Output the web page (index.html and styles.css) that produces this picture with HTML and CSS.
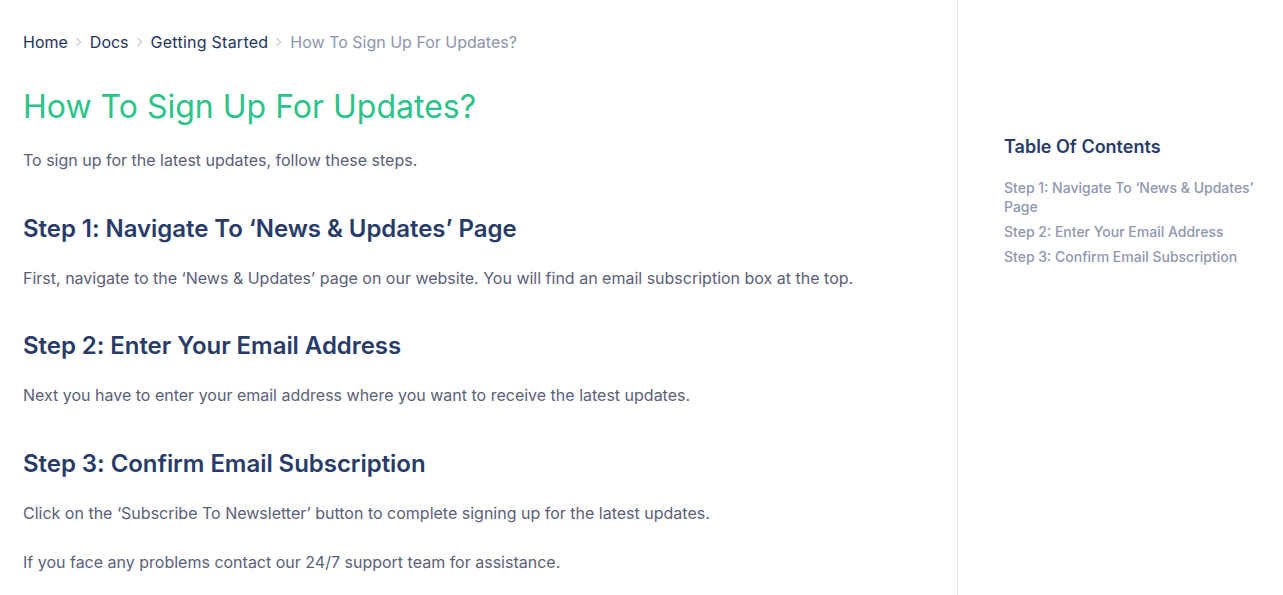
FILE: index.html
```html
<!DOCTYPE html>
<html lang="en">
<head>
<meta charset="utf-8">
<title>How To Sign Up For Updates?</title>
<link rel="stylesheet" href="styles.css">
</head>
<body>
<div class="page">
  <main class="content">
    <nav class="breadcrumb">
      <a href="#">Home</a>
      <svg class="chev" viewBox="0 0 8 10" width="8" height="10"><path d="M2 1.5 L5.5 5 L2 8.5" fill="none" stroke="#ccd1df" stroke-width="1.6" stroke-linecap="round" stroke-linejoin="round"/></svg>
      <a href="#">Docs</a>
      <svg class="chev" viewBox="0 0 8 10" width="8" height="10"><path d="M2 1.5 L5.5 5 L2 8.5" fill="none" stroke="#ccd1df" stroke-width="1.6" stroke-linecap="round" stroke-linejoin="round"/></svg>
      <a href="#" class="wide">Getting Started</a>
      <svg class="chev" viewBox="0 0 8 10" width="8" height="10"><path d="M2 1.5 L5.5 5 L2 8.5" fill="none" stroke="#ccd1df" stroke-width="1.6" stroke-linecap="round" stroke-linejoin="round"/></svg>
      <span class="current">How To Sign Up For Updates?</span>
    </nav>
    <h1 class="title">How To Sign Up For Updates?</h1>
    <p class="text">To sign up for the latest updates, follow these steps.</p>
    <h2 class="step">Step 1: Navigate To ‘News &amp; Updates’ Page</h2>
    <p class="text">First, navigate to the ‘News &amp; Updates’ page on our website. You will find an email subscription box at the top.</p>
    <h2 class="step">Step 2: Enter Your Email Address</h2>
    <p class="text">Next you have to enter your email address where you want to receive the latest updates.</p>
    <h2 class="step">Step 3: Confirm Email Subscription</h2>
    <p class="text">Click on the ‘Subscribe To Newsletter’ button to complete signing up for the latest updates.</p>
    <p class="text">If you face any problems contact our 24/7 support team for assistance.</p>
  </main>
  <aside class="sidebar">
    <h3 class="toc-title">Table Of Contents</h3>
    <ul class="toc">
      <li><a href="#">Step 1: Navigate To ‘News &amp; Updates’ Page</a></li>
      <li><a href="#">Step 2: Enter Your Email Address</a></li>
      <li><a href="#">Step 3: Confirm Email Subscription</a></li>
    </ul>
  </aside>
</div>
</body>
</html>
```

FILE: styles.css
```css
html, body {
  margin: 0;
  padding: 0;
  background: #ffffff;
}
body {
  font-family: Inter, "Noto Sans", "Liberation Sans", sans-serif;
  -webkit-font-smoothing: antialiased;
}
.page {
  display: flex;
  min-height: 595px;
}
.content {
  width: 934px;
  flex: none;
  padding: 30px 0 0 23px;
  border-right: 1px solid #e3e7f0;
  box-sizing: content-box;
}
.breadcrumb {
  display: flex;
  align-items: center;
  gap: 7px;
  font-size: 16px;
  line-height: 24px;
}
.breadcrumb a {
  color: #23335d;
  text-decoration: none;
}
.breadcrumb .wide {
  letter-spacing: 0.25px;
}
.breadcrumb .chev {
  display: block;
}
.breadcrumb .current {
  color: #8d94ad;
}
.title {
  margin: 34px 0 22px;
  font-size: 32px;
  line-height: 38px;
  font-weight: 400;
  color: #2cc38a;
}
.text {
  margin: 0 0 25px;
  font-size: 16px;
  line-height: 24px;
  color: #5b6079;
}
.step {
  margin: 40.6px 0 21px;
  font-size: 24px;
  line-height: 32px;
  font-weight: 600;
  letter-spacing: -0.05px;
  color: #283b69;
}
.sidebar {
  flex: 1;
  padding: 134px 20px 0 46px;
}
.toc-title {
  margin: 0 0 18px;
  font-size: 18px;
  line-height: 26px;
  font-weight: 600;
  color: #283b69;
}
.toc {
  list-style: none;
  margin: 0;
  padding: 0;
}
.toc li {
  margin: 0 0 6px;
  font-size: 14px;
  line-height: 19px;
  font-weight: 500;
}
.toc a {
  color: #8f97b1;
  text-decoration: none;
}
```
